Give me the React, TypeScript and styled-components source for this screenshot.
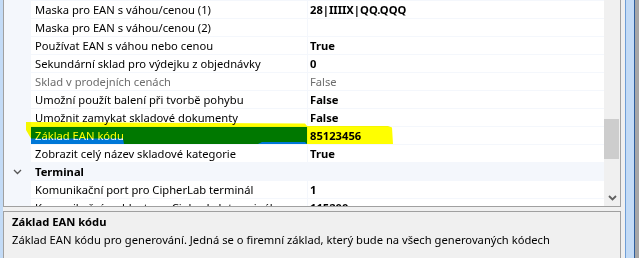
import React from 'react';
import styled, { createGlobalStyle } from 'styled-components';

const LINE = '#f4f7fc';

const GlobalStyle = createGlobalStyle`
  html, body {
    margin: 0;
    padding: 0;
    background: #f0f0f0;
  }

  body {
    font-family: 'Noto Sans', 'Segoe UI', sans-serif;
    font-size: 11.2px;
    color: #000;
  }
`;

const Page = styled.div`
  position: relative;
  display: flex;
  width: 639px;
  height: 258px;
  overflow: hidden;
  background: #f0f0f0;
`;

const FrameLeft = styled.div`
  flex: none;
  width: 3px;
  background: #c3dbf6;
`;

const Main = styled.div`
  flex: none;
  width: 618px;
  display: flex;
  flex-direction: column;
  gap: 4px;
`;

const GridBox = styled.div`
  flex: none;
  height: 206px;
  display: flex;
  border: 1px solid #a0a0a0;
  border-top: none;
  background: #fff;
`;

const Rows = styled.div`
  flex: 1;
  display: flex;
  flex-direction: column;
  overflow: hidden;
  border-top: 1px solid ${LINE};
`;

const Row = styled.div<{ $category?: boolean }>`
  flex: none;
  display: grid;
  grid-template-columns: 27px 277px 1fr;
  height: 18px;
  box-sizing: border-box;
  border-bottom: 1px solid ${LINE};
  line-height: 17px;
  background: ${(p) => (p.$category ? LINE : '#fff')};
  white-space: nowrap;
`;

const Gutter = styled.div`
  display: flex;
  align-items: center;
  justify-content: center;
  padding-right: 1px;
  background: ${LINE};
`;

const NameCell = styled.div<{ $selected?: boolean; $disabled?: boolean; $category?: boolean }>`
  box-sizing: border-box;
  padding-left: 4px;
  overflow: hidden;
  border-right: 1px solid ${(p) => (p.$category ? 'transparent' : LINE)};
  background: ${(p) => (p.$selected ? '#0078d7' : 'transparent')};
  color: ${(p) => (p.$selected ? '#fff' : p.$disabled ? '#6d6d6d' : '#000')};
  font-weight: ${(p) => (p.$category ? 700 : 400)};
`;

const ValueCell = styled.div<{ $disabled?: boolean }>`
  padding-left: 2px;
  overflow: hidden;
  color: ${(p) => (p.$disabled ? '#6d6d6d' : '#000')};
  font-weight: ${(p) => (p.$disabled ? 400 : 700)};
`;

const Scrollbar = styled.div`
  flex: none;
  width: 16px;
  display: flex;
  flex-direction: column;
  background: #f0f0f0;
`;

const Thumb = styled.div`
  flex: none;
  height: 40px;
  margin: 0 1px 0 0;
  background: #cdcdcd;
`;

const ArrowButton = styled.div`
  flex: none;
  margin-top: auto;
  height: 16px;
  display: flex;
  align-items: center;
  justify-content: center;
`;

const DescPanel = styled.div`
  flex: none;
  height: 60px;
  box-sizing: border-box;
  border: 1px solid #a0a0a0;
  padding: 1px 8px 0;
  background: #f0f0f0;
  line-height: 18px;
`;

const DescTitle = styled.div`
  font-weight: 700;
`;

const DescText = styled.div`
  white-space: nowrap;
`;

const FrameRight = styled.div`
  flex: none;
  margin-left: 4px;
  width: 8px;
  border-left: 1px solid #6f9fd8;
  border-right: 1px solid #2f5f9e;
  background: #c3dbf6;
`;

const FrameShadow = styled.div`
  flex: none;
  width: 4px;
  background: #a6a6a6;
`;

// marker stroke drawn over the selected row, multiplied like a real highlighter
const Highlighter = styled.svg`
  position: absolute;
  left: 0;
  top: 0;
  pointer-events: none;
  mix-blend-mode: multiply;
`;

type Item = {
  name: string;
  value?: string;
  category?: boolean;
  disabled?: boolean;
  selected?: boolean;
};

const items: Item[] = [
  { name: 'Maska pro EAN s váhou/cenou (1)', value: '28|IIIIX|QQ.QQQ' },
  { name: 'Maska pro EAN s váhou/cenou (2)', value: '' },
  { name: 'Používat EAN s váhou nebo cenou', value: 'True' },
  { name: 'Sekundární sklad pro výdejku z objednávky', value: '0' },
  { name: 'Sklad v prodejních cenách', value: 'False', disabled: true },
  { name: 'Umožní použít balení při tvorbě pohybu', value: 'False' },
  { name: 'Umožnit zamykat skladové dokumenty', value: 'False' },
  { name: 'Základ EAN kódu', value: '85123456', selected: true },
  { name: 'Zobrazit celý název skladové kategorie', value: 'True' },
  { name: 'Terminal', category: true },
  { name: 'Komunikační port pro CipherLab terminál', value: '1' },
  { name: 'Komunikační rychlost pro CipherLab terminál', value: '115200' },
];

const Chevron = ({ color, width }: { color: string; width: number }) => (
  <svg width="9" height="6" viewBox="0 0 9 6">
    <polyline points="1,1 4.5,4.5 8,1" fill="none" stroke={color} strokeWidth={width} />
  </svg>
);

const App = (): JSX.Element => (
  <>
    <GlobalStyle />
    <Page>
      <FrameLeft />
      <Main>
        <GridBox>
          <Rows>
            {items.map((item) => (
              <Row key={item.name} $category={item.category}>
                <Gutter>{item.category ? <Chevron color="#555" width={1.3} /> : null}</Gutter>
                <NameCell
                  $selected={item.selected}
                  $disabled={item.disabled}
                  $category={item.category}
                >
                  {item.name}
                </NameCell>
                <ValueCell $disabled={item.disabled}>{item.value}</ValueCell>
              </Row>
            ))}
          </Rows>
          <Scrollbar>
            <Thumb style={{ marginTop: 119 }} />
            <ArrowButton>
              <Chevron color="#606060" width={1.8} />
            </ArrowButton>
          </Scrollbar>
        </GridBox>
        <DescPanel>
          <DescTitle>Základ EAN kódu</DescTitle>
          <DescText>
            Základ EAN kódu pro generování. Jedná se o firemní základ, který bude na všech generovaných kódech
          </DescText>
        </DescPanel>
      </Main>
      <FrameRight />
      <FrameShadow />
      <Highlighter width="639" height="258" viewBox="0 0 639 258">
        <polygon
          points="26,122 305,123.5 307,126 388,126 392,127.5 393,144 307,144 305,142 262,142 258,144 124,144 123,138.5 31,138.5 26,130"
          fill="#ffff00"
        />
      </Highlighter>
    </Page>
  </>
);

export default App;
